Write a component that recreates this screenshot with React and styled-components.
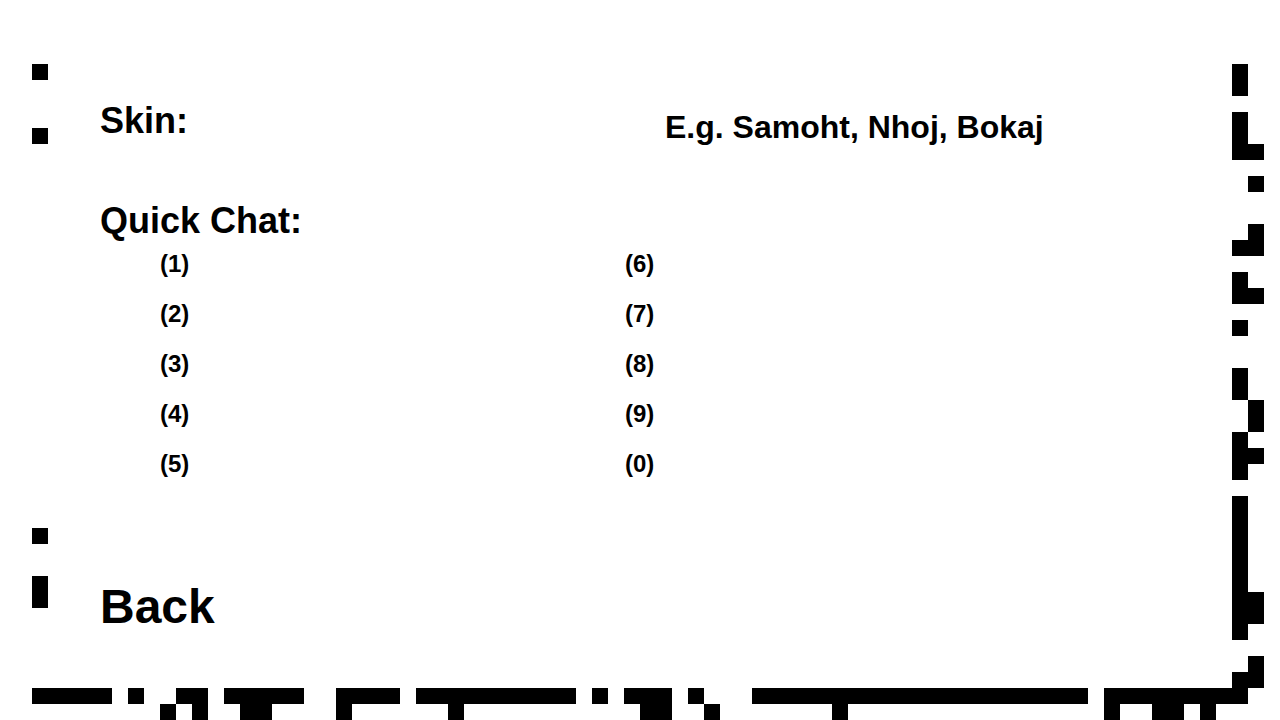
import React from "react";
import styled, { createGlobalStyle } from "styled-components";

const GlobalStyle = createGlobalStyle`
  *, *::before, *::after { box-sizing: border-box; }
  body {
    margin: 0;
    background: #fff;
    color: #000;
    font-family: "Liberation Sans", Arial, sans-serif;
    font-weight: 700;
  }
`;

const Screen = styled.main`
  position: relative;
  min-height: 100vh;
  padding: 103px 190px 80px 100px;
`;

const Terrain = styled.svg`
  position: absolute;
  inset: 0;
  width: 100%;
  height: 100%;
  pointer-events: none;
`;

const Form = styled.form`
  position: relative;
  display: flex;
  flex-direction: column;
`;

const SkinRow = styled.div`
  display: flex;
  align-items: flex-start;
  gap: 12px;
  height: 100px;
`;

const Label = styled.label`
  font-size: 36px;
  line-height: 36px;
`;

const Hint = styled.span`
  flex: 0 0 425px;
  font-size: 32px;
  line-height: 48px;
  white-space: nowrap;
`;

const TextInput = styled.input`
  flex: 1;
  min-width: 0;
  height: 36px;
  padding: 0;
  border: 0;
  outline: 0;
  background: transparent;
  color: inherit;
  font: inherit;
  font-size: ${({ $size }) => $size}px;
`;

const ChatGroup = styled.fieldset`
  min-width: 0;
  margin: 0;
  padding: 0;
  border: 0;
`;

const GroupTitle = styled.legend`
  padding: 0;
  font-size: 36px;
  line-height: 36px;
`;

const ChatGrid = styled.div`
  display: grid;
  grid-template-columns: 1fr 1fr;
  grid-template-rows: repeat(5, 50px);
  grid-auto-flow: column;
  padding-left: 60px;
`;

const ChatSlot = styled.label`
  display: flex;
  align-items: center;
  gap: 12px;
  padding-right: 24px;
  font-size: 24px;
  line-height: 50px;
`;

const BackButton = styled.button`
  align-self: flex-start;
  margin-top: 88px;
  padding: 0;
  border: 0;
  background: transparent;
  color: inherit;
  font: inherit;
  font-size: 48px;
  line-height: 60px;
  cursor: pointer;
`;

/* Solid blocks on a 16px tile map: [column, row, columns wide, rows tall] */
const blocks = [
  [2, 4, 1, 1], [2, 8, 1, 1], [2, 33, 1, 1], [2, 36, 1, 2],
  [77, 4, 1, 2], [77, 7, 1, 3], [78, 9, 1, 1], [78, 11, 1, 1],
  [78, 14, 1, 1], [77, 15, 2, 1], [77, 17, 1, 1], [77, 18, 2, 1],
  [77, 20, 1, 1], [77, 23, 1, 2], [78, 25, 1, 2], [77, 27, 1, 3],
  [78, 28, 1, 1], [77, 31, 1, 9], [78, 37, 1, 2], [78, 41, 1, 1],
  [77, 42, 2, 1],
  [2, 43, 5, 1], [8, 43, 1, 1], [11, 43, 2, 1], [14, 43, 5, 1],
  [21, 43, 4, 1], [26, 43, 10, 1], [37, 43, 1, 1], [39, 43, 3, 1],
  [43, 43, 1, 1], [47, 43, 21, 1], [69, 43, 9, 1],
  [10, 44, 1, 1], [12, 44, 1, 1], [15, 44, 2, 1], [21, 44, 1, 1],
  [28, 44, 1, 1], [40, 44, 2, 1], [44, 44, 1, 1], [52, 44, 1, 1],
  [69, 44, 1, 1], [72, 44, 2, 1], [75, 44, 1, 1],
];

const slots = [1, 2, 3, 4, 5, 6, 7, 8, 9, 0];

export default function App() {
  return (
    <>
      <GlobalStyle />
      <Screen>
        <Terrain
          viewBox="0 0 80 45"
          preserveAspectRatio="xMidYMid slice"
          shapeRendering="crispEdges"
          aria-hidden="true"
        >
          {blocks.map(([x, y, w, h]) => (
            <rect key={`${x}-${y}`} x={x} y={y} width={w} height={h} />
          ))}
        </Terrain>
        <Form onSubmit={(e) => e.preventDefault()}>
          <SkinRow>
            <Label htmlFor="skin">Skin:</Label>
            <TextInput id="skin" name="skin" $size={36} aria-describedby="skin-hint" />
            <Hint id="skin-hint">E.g. Samoht, Nhoj, Bokaj</Hint>
          </SkinRow>
          <ChatGroup>
            <GroupTitle>Quick Chat:</GroupTitle>
            <ChatGrid>
              {slots.map((n) => (
                <ChatSlot key={n}>
                  ({n})
                  <TextInput name={`chat-${n}`} $size={24} />
                </ChatSlot>
              ))}
            </ChatGrid>
          </ChatGroup>
          <BackButton type="button">Back</BackButton>
        </Form>
      </Screen>
    </>
  );
}
